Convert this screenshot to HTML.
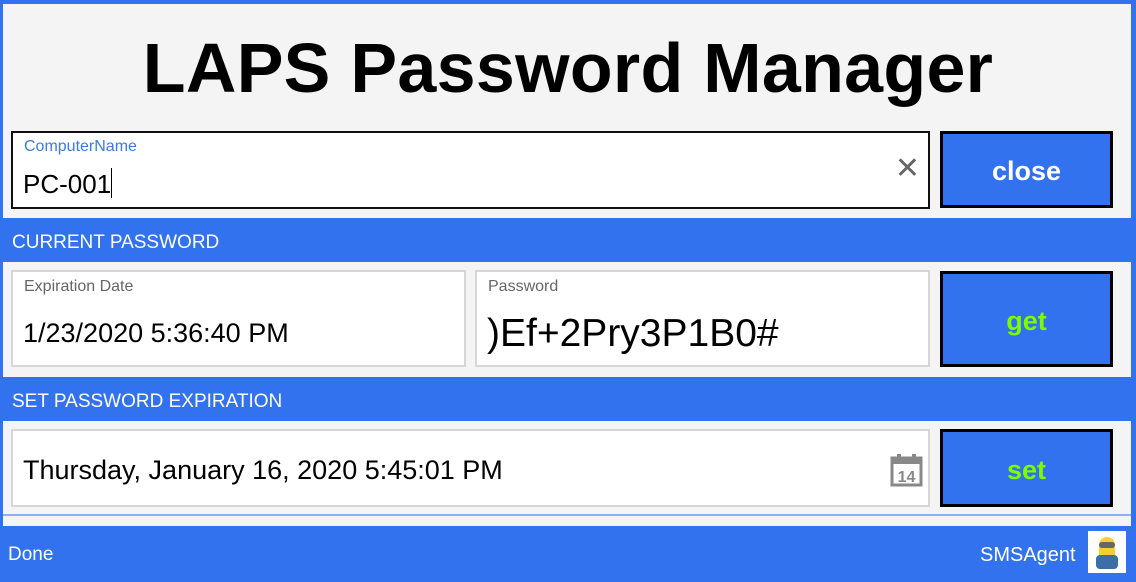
<!DOCTYPE html>
<html><head><style>
*{margin:0;padding:0;box-sizing:border-box}
body{width:1136px;height:582px;background:#3272ee;font-family:"Liberation Sans",sans-serif;position:relative;overflow:hidden}
.a{position:absolute}
.main{left:3px;top:4px;width:1128px;height:522px;background:#f4f4f4}
.title{left:0;top:28px;width:1136px;text-align:center;font-size:70px;font-weight:bold;color:#000;letter-spacing:0.3px}
.band{left:3px;width:1128px;height:44px;background:#3272ee;color:#fff;font-size:19px;padding:14px 0 0 9px}
.box{background:#fff;border:2px solid #d6d6d6}
.btn{background:#3272ee;border:3px solid #000;color:#fff;font-size:27px;font-weight:bold;text-align:center}
.lbl{font-size:16px;color:#666;position:absolute;left:11px;top:6px}
.val{position:absolute;left:10px;font-size:27px;color:#000}
</style></head><body>
<div class="a main"></div>
<div class="a title">LAPS Password Manager</div>
<div class="a box" style="left:11px;top:131px;width:919px;height:78px;border-color:#111">
 <div class="lbl" style="color:#3c7be0;top:5px">ComputerName</div>
 <div class="val" style="top:35px;font-size:26px">PC-001<span style="display:inline-block;width:1px;height:30px;background:#000;vertical-align:-5px"></span></div>
 <div class="a" style="right:8px;top:18px;font-size:30px;color:#666">✕</div>
</div>
<div class="a btn" style="left:940px;top:131px;width:173px;height:77px;line-height:75px">close</div>
<div class="a band" style="top:218px">CURRENT PASSWORD</div>
<div class="a box" style="left:11px;top:270px;width:455px;height:97px">
 <div class="lbl">Expiration Date</div>
 <div class="val" style="top:46px;font-size:27px">1/23/2020 5:36:40 PM</div>
</div>
<div class="a box" style="left:475px;top:270px;width:455px;height:97px">
 <div class="lbl">Password</div>
 <div class="val" style="top:40px;font-size:39px">)Ef+2Pry3P1B0#</div>
</div>
<div class="a btn" style="left:940px;top:271px;width:173px;height:96px;line-height:94px;color:#7cfc00">get</div>
<div class="a band" style="top:377px">SET PASSWORD EXPIRATION</div>
<div class="a box" style="left:11px;top:429px;width:919px;height:78px">
 <div class="val" style="top:24px;font-size:27px">Thursday, January 16, 2020 5:45:01 PM</div>
 <svg class="a" style="right:5px;top:22px" width="33" height="34" viewBox="0 0 33 34"><rect x="2" y="5" width="29" height="27" fill="none" stroke="#888" stroke-width="3"/><rect x="2" y="5" width="29" height="6" fill="#888"/><rect x="7" y="1" width="4" height="7" fill="#888"/><rect x="22" y="1" width="4" height="7" fill="#888"/><text x="16.5" y="29" font-size="16" font-weight="bold" fill="#888" text-anchor="middle" font-family="Liberation Sans">14</text></svg>
</div>
<div class="a btn" style="left:940px;top:429px;width:173px;height:78px;line-height:76px;color:#7cfc00">set</div>
<div class="a" style="left:3px;top:514px;width:1128px;height:2px;background:#8fb0f0"></div>
<div class="a" style="left:8px;top:544px;color:#fff;font-size:19px">Done</div>
<div class="a" style="left:980px;top:544px;color:#fff;font-size:20px">SMSAgent</div>
<div class="a" style="left:1088px;top:531px;width:38px;height:42px;background:#fff">
 <div class="a" style="left:11px;top:6px;width:16px;height:24px;background:#f4cf2f;border-radius:8px 8px 4px 4px"></div>
 <div class="a" style="left:11px;top:11px;width:16px;height:6px;background:#666;border-radius:3px"></div>
 <div class="a" style="left:8px;top:24px;width:22px;height:14px;background:#3c6ea8;border-radius:4px"></div>
</div>
</body></html>
